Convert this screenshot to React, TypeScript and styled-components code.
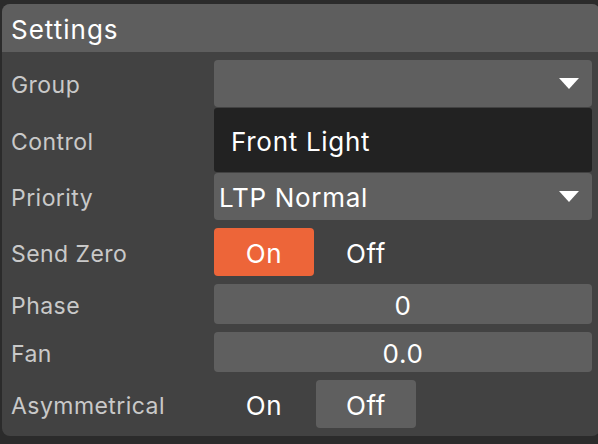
import React from "react";
import styled, { createGlobalStyle } from "styled-components";

const Global = createGlobalStyle`
  html, body { margin: 0; padding: 0; background: #2b2b2b; }
  body { font-family: Inter, "Noto Sans", sans-serif; }
`;

const Page = styled.div`
  width: 598px;
  height: 444px;
  padding: 4px 0 0 2px;
  box-sizing: border-box;
  overflow: hidden;
`;

const Panel = styled.div`
  width: 598px;
  height: 432px;
  background: #424242;
  border-radius: 8px;
  overflow: hidden;
  display: flex;
  flex-direction: column;
`;

const Header = styled.div`
  height: 48px;
  background: #5e5e5e;
  color: #ffffff;
  font-size: 26px;
  letter-spacing: 1px;
  display: flex;
  align-items: center;
  padding-left: 9px;
  padding-top: 2px;
  box-sizing: border-box;
`;

const Body = styled.div`
  display: flex;
  flex-direction: column;
  padding: 8px 8px 8px 0;
`;

const Row = styled.div<{ $h: number; $gap: number }>`
  display: grid;
  grid-template-columns: 212px 1fr;
  height: ${(p) => p.$h}px;
  margin-top: ${(p) => p.$gap}px;
  align-items: center;
`;

const Label = styled.div`
  color: #c9c9c9;
  font-size: 23px;
  letter-spacing: 0.45px;
  padding-left: 9px;
  padding-top: 3px;
`;

const Select = styled.div`
  height: 100%;
  background: #5f5f5f;
  border-radius: 4px;
  display: flex;
  align-items: center;
  justify-content: space-between;
  padding: 2px 13px 0 5px;
  box-sizing: border-box;
  color: #fff;
  font-size: 26px;
  letter-spacing: 0.7px;
`;

const Option = styled.div`
  height: 100%;
  background: #222222;
  border-radius: 3px;
  display: flex;
  align-items: center;
  padding: 2px 0 0 17px;
  box-sizing: border-box;
  color: #fff;
  font-size: 26px;
  letter-spacing: 0.7px;
`;

const Caret = styled.div`
  width: 0;
  height: 0;
  margin-top: -2px;
  border-left: 10.5px solid transparent;
  border-right: 10.5px solid transparent;
  border-top: 11px solid #ffffff;
`;

const Toggle = styled.div`
  display: flex;
  height: 100%;
  gap: 2px;
`;

const ToggleBtn = styled.div<{ $bg: string }>`
  width: 100px;
  height: 100%;
  background: ${(p) => p.$bg};
  border-radius: 4px;
  display: flex;
  align-items: center;
  justify-content: center;
  padding-top: 2px;
  box-sizing: border-box;
  color: #fff;
  font-size: 26px;
  letter-spacing: 0.7px;
`;

const Field = styled.div`
  height: 100%;
  background: #5f5f5f;
  border-radius: 4px;
  display: flex;
  align-items: center;
  justify-content: center;
  padding-top: 2px;
  box-sizing: border-box;
  color: #fff;
  font-size: 26px;
  letter-spacing: 0.7px;
`;

export default function App() {
  return (
    <>
      <Global />
      <Page>
        <Panel>
          <Header>Settings</Header>
          <Body>
            <Row $h={47} $gap={0}>
              <Label>Group</Label>
              <Select>
                <span />
                <Caret />
              </Select>
            </Row>
            <Row $h={64} $gap={1}>
              <Label>Control</Label>
              <Option>Front Light</Option>
            </Row>
            <Row $h={47} $gap={1}>
              <Label>Priority</Label>
              <Select>
                <span>LTP Normal</span>
                <Caret />
              </Select>
            </Row>
            <Row $h={48} $gap={8}>
              <Label>Send Zero</Label>
              <Toggle>
                <ToggleBtn $bg="#ed6539">On</ToggleBtn>
                <ToggleBtn $bg="transparent">Off</ToggleBtn>
              </Toggle>
            </Row>
            <Row $h={40} $gap={8}>
              <Label>Phase</Label>
              <Field>0</Field>
            </Row>
            <Row $h={40} $gap={8}>
              <Label>Fan</Label>
              <Field>0.0</Field>
            </Row>
            <Row $h={48} $gap={8}>
              <Label>Asymmetrical</Label>
              <Toggle>
                <ToggleBtn $bg="transparent">On</ToggleBtn>
                <ToggleBtn $bg="#5f5f5f">Off</ToggleBtn>
              </Toggle>
            </Row>
          </Body>
        </Panel>
      </Page>
    </>
  );
}
